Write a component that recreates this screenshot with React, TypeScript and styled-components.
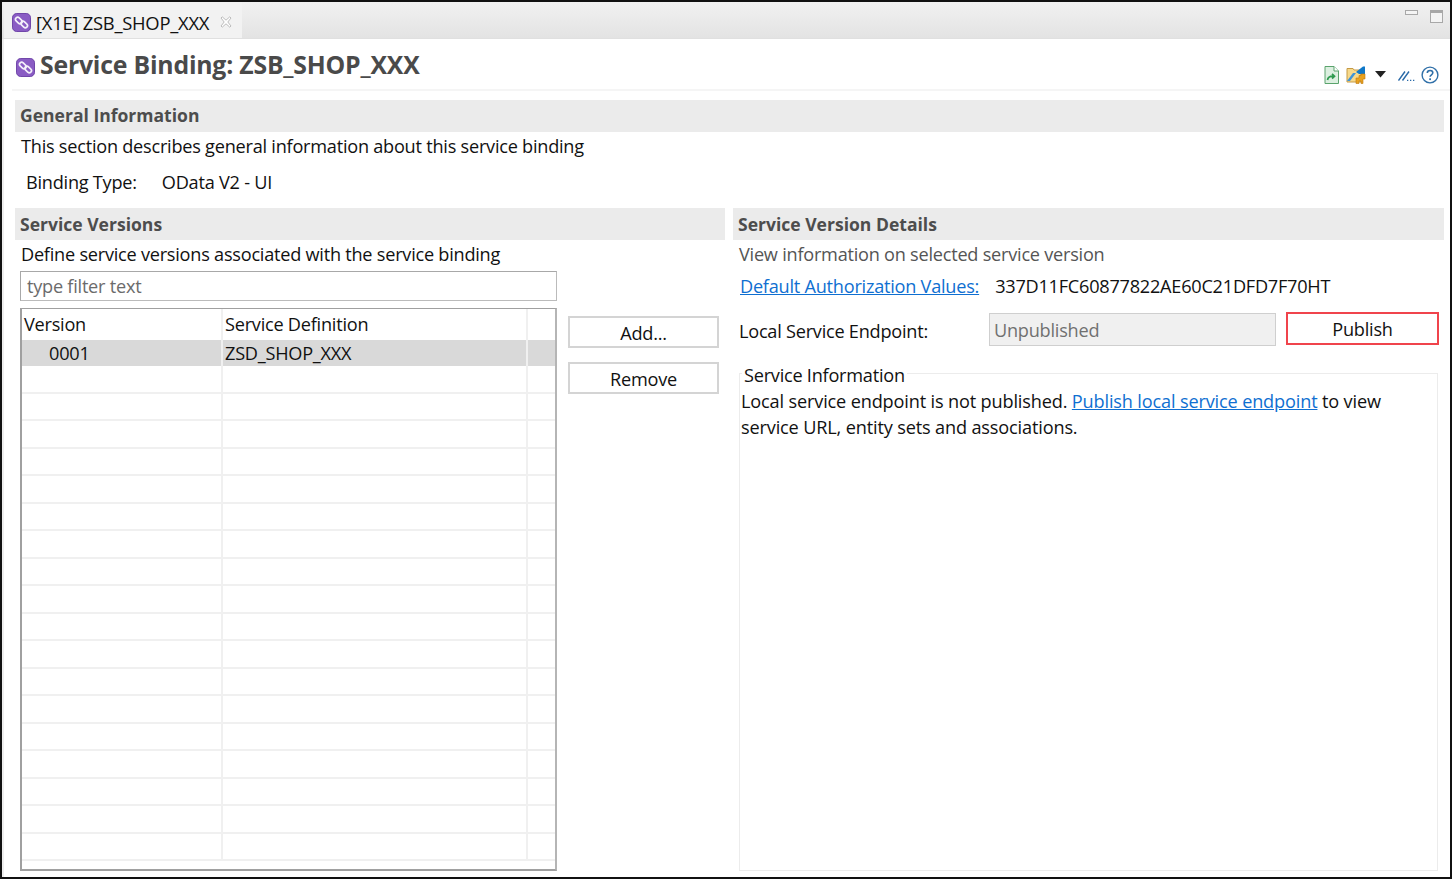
import React from "react";
import styled, { createGlobalStyle } from "styled-components";

const Global = createGlobalStyle`
  html, body { margin: 0; padding: 0; background: #fff; }
  body { font-family: "Open Sans", "Noto Sans", sans-serif; font-size: 18.15px; color: #111; }
  * { box-sizing: border-box; }
`;

const Frame = styled.div`
  width: 1452px; height: 879px; border: 2px solid #111; background: #eeeeee;
  display: flex; flex-direction: column; overflow: hidden;
`;
const TabBar = styled.div`
  height: 37px; flex: none; display: flex; justify-content: space-between;
  background: linear-gradient(#f1f1f1, #e3e3e3); border-bottom: 1px solid #e0e0e0;
`;
const Tab = styled.div`
  width: 238px; margin-left: 2px; background: #f2f2f2; display: flex; align-items: flex-start; padding: 9px 0 0 8px; gap: 5px;
  white-space: nowrap; font-size: 18.4px; letter-spacing: -0.25px; line-height: 24px;
`;
const TabIcon = styled.span` display: flex; margin-top: 2px; `;
const TabTitle = styled.span` margin-right: 5px; `;
const CloseSlot = styled.span` display: flex; margin-top: 4px; `;
const WindowControls = styled.div` display: flex; gap: 12px; padding: 8px 7px 0 0; align-items: flex-start; `;
const Body = styled.div`
  flex: 1; margin-left: 2px; padding: 0 6px 6px 11px; display: flex; flex-direction: column; min-height: 0; background: #fff;
`;
const FormHeader = styled.div`
  height: 52px; flex: none; display: flex; align-items: flex-start; justify-content: space-between;
  border-bottom: 2px solid #f5f5f5; margin: 0 -6px 0 -3px; padding: 7px 10px 0 4px;
`;
const FormTitle = styled.div`
  display: flex; align-items: center; gap: 5px;
  font-size: 24.8px; font-weight: 700; color: #4a4a4a; line-height: 36px; letter-spacing: -0.2px; white-space: nowrap;
`;
const TitleIcon = styled.span` display: flex; margin-top: 6px; `;
const ToolBar = styled.div` display: flex; align-items: flex-start; padding-top: 20px; padding-right: 1px; `;
const ToolSlot = styled.span<{ $gap?: number; $drop?: number }>`
  display: flex; margin-left: ${(p) => p.$gap ?? 0}px; margin-top: ${(p) => p.$drop ?? 0}px;
`;
const SectionBand = styled.div<{ $compact?: boolean }>`
  height: 32px; flex: none; background: #ebebeb; padding-left: 5px; line-height: ${(p) => (p.$compact ? 30 : 32)}px;
  font-size: 17.55px; font-weight: 700; color: #4d4d4d; white-space: nowrap;
`;
const Section = styled.section` display: flex; flex-direction: column; margin-top: 9px; `;
const Description = styled.div<{ $muted?: boolean; $flush?: boolean }>`
  padding-left: ${(p) => (p.$flush ? 0 : 6)}px; height: ${(p) => (p.$flush ? 30 : 29)}px; line-height: 28px; white-space: nowrap; letter-spacing: -0.24px;
  color: ${(p) => (p.$muted ? "#555" : "#111")};
`;
const BindingRow = styled.div`
  display: flex; gap: 25px; padding: 6px 0 0 11px; height: 47px; line-height: 30px; letter-spacing: -0.24px;
`;
const Columns = styled.div`
  flex: 1; min-height: 0; display: grid; grid-template-columns: 710px 711px; column-gap: 8px;
`;
const Column = styled.div` display: flex; flex-direction: column; min-height: 0; `;
const VersionsBody = styled.div`
  flex: 1; min-height: 0; display: grid; grid-template-columns: 537px 151px; column-gap: 11px; padding: 2px 0 0 5px;
  grid-template-rows: 30px 1fr; row-gap: 7px;
`;
const Filter = styled.div`
  border: 1px solid #a8a8a8; border-right-color: #bbb; border-bottom-color: #bbb; padding-left: 6px; line-height: 28px;
  color: #6b6b6b; letter-spacing: -0.24px;
`;
const Table = styled.div`
  grid-column: 1; grid-row: 2; border-style: solid; border-color: #a0a0a0 #b5b5b5 #a0a0a0 #a0a0a0; overflow: hidden;
  display: flex; flex-direction: column; border-width: 1px 2px 2px 2px;
`;
const Row = styled.div<{ $selected?: boolean; $head?: boolean }>`
  flex: none; height: ${(p) => (p.$head ? 31 : p.$selected ? 26 : 27.5)}px; display: grid; grid-template-columns: 201px 305px 1fr;
  background: ${(p) => (p.$selected ? "#d9d9d9" : "#fff")};
  border-bottom: ${(p) => (p.$head || p.$selected ? "0" : "2px solid #f0f0f0")};
  line-height: ${(p) => (p.$head ? 30 : 26)}px; letter-spacing: -0.24px;
`;
const Cell = styled.div<{ $indent?: number }>`
  border-right: 2px solid #f0f0f0; padding-left: ${(p) => p.$indent ?? 2}px; white-space: nowrap;
  &:last-child { border-right: 0; }
`;
const ButtonStack = styled.div`
  grid-column: 2; grid-row: 2; display: flex; flex-direction: column; gap: 14px; padding-top: 8px;
`;
const PushButton = styled.button<{ $primary?: boolean }>`
  display: block; height: ${(p) => (p.$primary ? 33 : 32)}px; width: ${(p) => (p.$primary ? "153px" : "151px")};
  background: #fff; padding: 1px 0 0; font: inherit; color: #111; letter-spacing: -0.24px;
  border: ${(p) => (p.$primary ? "2px solid #f0444c" : "2px solid #d4d4d4")};
`;
const DetailsBody = styled.div`
  flex: 1; min-height: 0; display: flex; flex-direction: column; padding: 0 6px 0 6px;
`;
const AuthRow = styled.div`
  height: 33px; display: flex; gap: 16px; padding-left: 1px; line-height: 32px; white-space: nowrap; letter-spacing: -0.24px;
`;
const Link = styled.a`
  color: #0f6fd1; text-decoration: underline; cursor: pointer;
`;
const EndpointRow = styled.div`
  height: 33px; margin-top: 10px; display: grid; grid-template-columns: 250px 287px 1fr; line-height: 36px;
  letter-spacing: -0.24px; white-space: nowrap;
`;
const ReadOnlyField = styled.div`
  background: #f0f0f0; border: 1px solid #cfcfcf; padding-left: 4px; color: #707070; width: 287px; height: 33px; line-height: 33px;
`;
const PublishSlot = styled.div` padding-left: 10px; margin-top: -1px; line-height: normal; `;
const Group = styled.fieldset`
  flex: 1; min-height: 0; margin: 12px 0 0 0; padding: 0 0 0 1px; border: 1px solid #ececec; width: 699px; min-width: 0;
`;
const Legend = styled.legend`
  margin-left: 1px; padding: 4px 2px 0; line-height: 26px; letter-spacing: -0.24px; background: #fff;
`;
const GroupText = styled.div` line-height: 26px; letter-spacing: -0.16px; white-space: nowrap; `;

const ChainIcon = ({ size = 20 }: { size?: number }) => (
  <svg width={size} height={size} viewBox="0 0 20 20">
    <rect x="0.5" y="0.5" width="19" height="19" rx="4.5" fill="#8a5cc4" stroke="#6a3fa5" />
    <g fill="none" stroke="#f4f0fa" strokeWidth="1.7">
      <rect x="3.2" y="5.6" width="8" height="4.6" rx="2.3" transform="rotate(45 7.2 7.900)" />
      <rect x="8.8" y="9.800" width="8" height="4.600" rx="2.300" transform="rotate(45 12.800 12.100)" />
    </g>
  </svg>
);
const CloseIcon = () => (
  <svg width="14" height="14" viewBox="0 0 14 14">
    <path d="M2 3 3.200 1.800 7 5.200 10.800 1.800 12 3 8.800 7 12 11 10.800 12.200 7 8.800 3.200 12.200 2 11 5.200 7Z" fill="#fff" stroke="#bdbdbd" />
  </svg>
);
const Minimize = () => (
  <svg width="13" height="6" viewBox="0 0 13 6"><rect x="0.5" y="0.5" width="12" height="4" fill="#f4f4f4" stroke="#a8a8a8" /></svg>
);
const Maximize = () => (
  <svg width="13" height="13" viewBox="0 0 13 13"><rect x="0.5" y="0.5" width="12" height="12" fill="#f4f4f4" stroke="#a8a8a8" /><rect x="1" y="1" width="11" height="2" fill="#a8a8a8" /></svg>
);
const DocIcon = () => (
  <svg width="15" height="18" viewBox="0 0 15 18">
    <path d="M1 .5h9l4.500 4.500v12.500H1Z" fill="#dcefe0" stroke="#5aa36c" />
    <path d="M10 .5V5h4.500" fill="#fff" stroke="#5aa36c" />
    <path d="M3.500 14c.5-3 2.500-4 6-3.800M8 8l2.500 2.200L8 12.500" fill="none" stroke="#2e9a4e" strokeWidth="1.700" />
  </svg>
);
const FolderIcon = () => (
  <svg width="20" height="18" viewBox="0 0 20 18">
    <path d="M1 4V2.500h6L8 4h7v12H1Z" fill="#f7d98b" stroke="#c59a45" />
    <path d="M10 6 17 .5h2V8H13Z" fill="#0f78c8" />
    <path d="M1 15 7 7h3L4 15Z" fill="#3f94d8" />
    <path d="M10 12h3V9.500h2V8h4v5h-2v4.500h-2V15h-2v2.500h-3Z" fill="#e8a21f" stroke="#bd7b10" strokeWidth=".6" />
  </svg>
);
const Chevron = () => (
  <svg width="11" height="7" viewBox="0 0 11 7"><path d="M0 0h11L5.500 6.500Z" fill="#222" /></svg>
);
const SlashesIcon = () => (
  <svg width="19" height="10" viewBox="0 0 19 10">
    <g stroke="#2a6aa8" strokeWidth="1.400" fill="none"><path d="M.5 9.500 7 .5M4.500 9.500 11 .5" /></g>
    <path d="M9 9.500h1.300M12 9.500h1.300M15 9.500h1.300" stroke="#2a6aa8" strokeWidth="1.300" />
  </svg>
);
const HelpIcon = () => (
  <svg width="18" height="18" viewBox="0 0 18 18">
    <circle cx="9" cy="9" r="7.900" fill="#fff" stroke="#2f6fa8" strokeWidth="1.400" />
    <path d="M6.300 7c0-1.600 1.200-2.500 2.800-2.500s2.700.9 2.700 2.300c0 2-2.700 2-2.700 4" fill="none" stroke="#2f6fa8" strokeWidth="1.600" />
    <rect x="8.200" y="12.300" width="1.800" height="1.800" fill="#2f6fa8" />
  </svg>
);

const emptyRows = Array.from({ length: 18 }, (_, i) => i);

export default function App() {
  return (
    <>
      <Global />
      <Frame>
        <TabBar>
          <Tab>
            <TabIcon><ChainIcon size={19} /></TabIcon>
            <TabTitle>[X1E] ZSB_SHOP_XXX</TabTitle>
            <CloseSlot><CloseIcon /></CloseSlot>
          </Tab>
          <WindowControls>
            <Minimize />
            <Maximize />
          </WindowControls>
        </TabBar>
        <Body>
          <FormHeader>
            <FormTitle>
              <TitleIcon><ChainIcon size={19} /></TitleIcon>
              Service Binding: ZSB_SHOP_XXX
            </FormTitle>
            <ToolBar>
              <ToolSlot><DocIcon /></ToolSlot>
              <ToolSlot $gap={7}><FolderIcon /></ToolSlot>
              <ToolSlot $gap={9} $drop={5}><Chevron /></ToolSlot>
              <ToolSlot $gap={12} $drop={5}><SlashesIcon /></ToolSlot>
              <ToolSlot $gap={4}><HelpIcon /></ToolSlot>
            </ToolBar>
          </FormHeader>
          <Section>
            <SectionBand $compact>General Information</SectionBand>
            <Description>This section describes general information about this service binding</Description>
            <BindingRow>
              <span>Binding Type:</span>
              <span>OData V2 - UI</span>
            </BindingRow>
          </Section>
          <Columns>
            <Column>
              <SectionBand>Service Versions</SectionBand>
              <Description>Define service versions associated with the service binding</Description>
              <VersionsBody>
                <Filter>type filter text</Filter>
                <Table>
                  <Row $head>
                    <Cell>Version</Cell>
                    <Cell>Service Definition</Cell>
                    <Cell />
                  </Row>
                  <Row $selected>
                    <Cell $indent={27}>0001</Cell>
                    <Cell>ZSD_SHOP_XXX</Cell>
                    <Cell />
                  </Row>
                  {emptyRows.map((i) => (
                    <Row key={i}><Cell /><Cell /><Cell /></Row>
                  ))}
                </Table>
                <ButtonStack>
                  <PushButton>Add...</PushButton>
                  <PushButton>Remove</PushButton>
                </ButtonStack>
              </VersionsBody>
            </Column>
            <Column>
              <SectionBand>Service Version Details</SectionBand>
              <DetailsBody>
                <Description $muted $flush>View information on selected service version</Description>
                <AuthRow>
                  <Link>Default Authorization Values:</Link>
                  <span>337D11FC60877822AE60C21DFD7F70HT</span>
                </AuthRow>
                <EndpointRow>
                  <span>Local Service Endpoint:</span>
                  <ReadOnlyField>Unpublished</ReadOnlyField>
                  <PublishSlot><PushButton $primary>Publish</PushButton></PublishSlot>
                </EndpointRow>
                <Group>
                  <Legend>Service Information</Legend>
                  <GroupText>
                    Local service endpoint is not published. <Link>Publish local service endpoint</Link> to view
                    <br />
                    service URL, entity sets and associations.
                  </GroupText>
                </Group>
              </DetailsBody>
            </Column>
          </Columns>
        </Body>
      </Frame>
    </>
  );
}
